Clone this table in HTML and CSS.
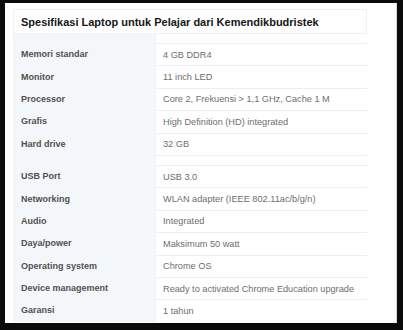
FILE: index.html
```html
<!DOCTYPE html>
<html lang="id">
<head>
<meta charset="utf-8">
<title>Spesifikasi Laptop</title>
<link rel="stylesheet" href="styles.css">
</head>
<body>
<div class="panel">
  <h2 class="title">Spesifikasi Laptop untuk Pelajar dari Kemendikbudristek</h2>
  <div class="specs">
    <div class="key gap"></div><div class="val gap first"></div>
    <div class="key">Memori standar</div><div class="val">4 GB DDR4</div>
    <div class="key">Monitor</div><div class="val">11 inch LED</div>
    <div class="key">Processor</div><div class="val">Core 2, Frekuensi &gt; 1,1 GHz, Cache 1 M</div>
    <div class="key">Grafis</div><div class="val">High Definition (HD) integrated</div>
    <div class="key">Hard drive</div><div class="val">32 GB</div>
    <div class="key gap"></div><div class="val gap"></div>
    <div class="key">USB Port</div><div class="val">USB 3.0</div>
    <div class="key">Networking</div><div class="val">WLAN adapter (IEEE 802.11ac/b/g/n)</div>
    <div class="key">Audio</div><div class="val">Integrated</div>
    <div class="key">Daya/power</div><div class="val">Maksimum 50 watt</div>
    <div class="key">Operating system</div><div class="val">Chrome OS</div>
    <div class="key">Device management</div><div class="val">Ready to activated Chrome Education upgrade</div>
    <div class="key">Garansi</div><div class="val">1 tahun</div>
  </div>
</div>
</body>
</html>
```
FILE: styles.css
```css
html, body {
  margin: 0;
  background: #0b0b0b;
}

body {
  padding: 3px 6px 7px 5px;
  font-family: "Liberation Sans", Arial, sans-serif;
}

.panel {
  box-sizing: border-box;
  width: 392px;
  height: 320px;
  background: #fff;
  border-right: 1px solid #d8d8d8;
  padding: 6px 0 0 8px;
  overflow: hidden;
}

.title {
  box-sizing: border-box;
  width: 354px;
  height: 25px;
  margin: 0;
  padding: 0 0 0 7px;
  border: 1px solid #f1f1f1;
  display: flex;
  align-items: center;
  font-size: 11px;
  font-weight: bold;
  color: #151515;
}

.specs {
  display: grid;
  grid-template-columns: 142px 212px;
  grid-template-rows: 9px repeat(5, 22.4px) 10px repeat(7, 22.4px);
}

.key {
  background: #f4f7fa;
  display: flex;
  align-items: center;
  padding-left: 8px;
  font-size: 9px;
  font-weight: bold;
  color: #505050;
}

.val {
  box-sizing: border-box;
  border-top: 1px solid #eceef1;
  border-left: 1px solid #f0f2f5;
  display: flex;
  align-items: center;
  padding-left: 7px;
  font-size: 9.2px;
  color: #6e6e6e;
}

.val.first {
  border-top: 0;
}
```
